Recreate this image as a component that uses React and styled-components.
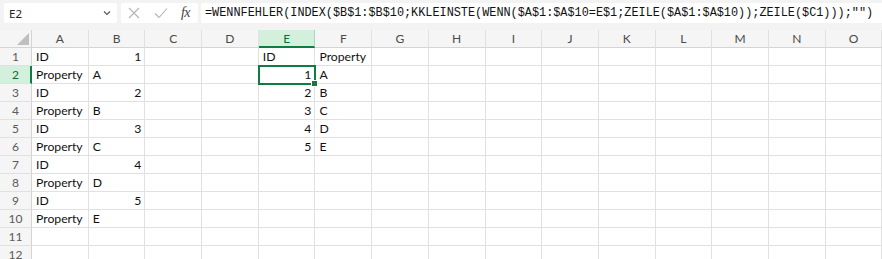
import React from "react";
import styled, { createGlobalStyle } from "styled-components";

const GlobalStyle = createGlobalStyle`
  html, body {
    margin: 0;
    padding: 0;
    background: #ffffff;
  }
  body {
    font-family: Lato, "Noto Sans", sans-serif;
    overflow: hidden;
  }
`;

const COLS = ["A", "B", "C", "D", "E", "F", "G", "H", "I", "J", "K", "L", "M", "N", "O"];
const ROWS = 12;
const FORMULA =
  '=WENNFEHLER(INDEX($B$1:$B$10;KKLEINSTE(WENN($A$1:$A$10=E$1;ZEILE($A$1:$A$10));ZEILE($C1)));"")';

// cell values keyed by "col+row"
const data = {};
for (let i = 0; i < 5; i++) {
  data["A" + (i * 2 + 1)] = { v: "ID" };
  data["B" + (i * 2 + 1)] = { v: String(i + 1), num: true };
  data["A" + (i * 2 + 2)] = { v: "Property" };
  data["B" + (i * 2 + 2)] = { v: "ABCDE"[i] };
  data["E" + (i + 2)] = { v: String(i + 1), num: true };
  data["F" + (i + 2)] = { v: "ABCDE"[i] };
}
data["E1"] = { v: "ID" };
data["F1"] = { v: "Property" };

const SEL_COL = "E";
const SEL_ROW = 2;

const App = () => {
  return (
    <Page>
      <GlobalStyle />
      <TopBar>
        <NameBox>
          <span>E2</span>
          <svg width="8" height="6" viewBox="0 0 8 6">
            <path d="M1 1.5 L4 4.5 L7 1.5" fill="none" stroke="#555" strokeWidth="1.1" />
          </svg>
        </NameBox>
        <FxBox>
          <svg width="14" height="14" viewBox="0 0 14 14">
            <path d="M2 2 L12 12 M12 2 L2 12" stroke="#b4b4b4" strokeWidth="1.1" fill="none" />
          </svg>
          <svg width="16" height="14" viewBox="0 0 16 14">
            <path d="M2 7.5 L6 11.5 L14 2.5" stroke="#b4b4b4" strokeWidth="1.1" fill="none" />
          </svg>
          <FxLabel>fx</FxLabel>
        </FxBox>
        <FormulaBox>{FORMULA}</FormulaBox>
      </TopBar>
      <Sheet>
        <Corner>
          <svg width="12" height="12" viewBox="0 0 12 12">
            <path d="M12 0 L12 12 L0 12 Z" fill="#bfbfbf" />
          </svg>
        </Corner>
        {COLS.map((c) => (
          <ColHead key={c} $selected={c === SEL_COL}>
            {c}
          </ColHead>
        ))}
        {Array.from({ length: ROWS }, (_, r) => {
          const row = r + 1;
          return (
            <React.Fragment key={row}>
              <RowHead $selected={row === SEL_ROW}>{row}</RowHead>
              {COLS.map((c) => {
                const cell = data[c + row];
                const active = c === SEL_COL && row === SEL_ROW;
                return (
                  <Cell key={c} $num={cell && cell.num} $active={active}>
                    {cell ? cell.v : ""}
                    {active && <FillHandle />}
                  </Cell>
                );
              })}
            </React.Fragment>
          );
        })}
      </Sheet>
    </Page>
  );
};

export default App;

const Page = styled.div`
  width: 882px;
  height: 259px;
  overflow: hidden;
  background: #ffffff;
`;

const TopBar = styled.div`
  height: 30px;
  box-sizing: border-box;
  display: flex;
  align-items: flex-start;
  padding: 3px 0 0 4px;
  gap: 3px;
  background: #f3f3f3;
`;

const BoxBase = styled.div`
  height: 20px;
  box-sizing: border-box;
  background: #ffffff;
  border-radius: 2px;
  display: flex;
  align-items: center;
`;

const NameBox = styled(BoxBase)`
  width: 113px;
  padding: 0 6px 0 5px;
  justify-content: space-between;
  font-family: "Noto Sans", sans-serif;
  font-size: 11.5px;
  color: #222;
  margin-right: 1px;
`;

const FxBox = styled(BoxBase)`
  width: 77px;
  padding: 0 8px 0 6px;
  justify-content: space-between;
`;

const FxLabel = styled.span`
  font-family: "Liberation Serif", serif;
  font-style: italic;
  font-size: 14px;
  color: #444;
  letter-spacing: -0.5px;
`;

const FormulaBox = styled(BoxBase)`
  flex: 1;
  padding-left: 4px;
  font-family: "Liberation Mono", monospace;
  font-size: 11.85px;
  color: #111;
  white-space: nowrap;
  overflow: hidden;
  border-radius: 2px 0 0 2px;
`;

const Sheet = styled.div`
  display: grid;
  grid-template-columns: 32px repeat(15, 56.7px);
  grid-auto-rows: 18px;
`;

const Corner = styled.div`
  background: #f5f5f5;
  border-right: 1px solid #d4d4d4;
  border-bottom: 1px solid #d4d4d4;
  box-sizing: border-box;
  display: flex;
  align-items: flex-end;
  justify-content: flex-end;
  padding: 0 2px 2px 0;
`;

const ColHead = styled.div`
  box-sizing: border-box;
  background: ${(p) => (p.$selected ? "#d3f0dd" : "#f5f5f5")};
  color: ${(p) => (p.$selected ? "#0e6b38" : "#4a4a4a")};
  border-right: 1px solid ${(p) => (p.$selected ? "#a8d8b9" : "#e1e1e1")};
  border-bottom: ${(p) => (p.$selected ? "2px solid #107c41" : "1px solid #d4d4d4")};
  font-size: 12px;
  display: flex;
  align-items: center;
  justify-content: center;
  padding-top: ${(p) => (p.$selected ? "1px" : "0")};
`;

const RowHead = styled.div`
  box-sizing: border-box;
  background: ${(p) => (p.$selected ? "#d3f0dd" : "#f5f5f5")};
  color: ${(p) => (p.$selected ? "#0e6b38" : "#5a5a5a")};
  border-right: ${(p) => (p.$selected ? "2px solid #107c41" : "1px solid #d4d4d4")};
  border-bottom: 1px solid #e1e1e1;
  font-size: 12px;
  display: flex;
  align-items: center;
  justify-content: center;
  padding-left: ${(p) => (p.$selected ? "1px" : "0")};
`;

const Cell = styled.div`
  position: relative;
  box-sizing: border-box;
  border-right: 1px solid #e1e1e1;
  border-bottom: 1px solid #e1e1e1;
  font-size: 12.2px;
  color: #111;
  line-height: 17px;
  padding: 0 3px 0 4px;
  text-align: ${(p) => (p.$num ? "right" : "left")};
  white-space: nowrap;
  overflow: visible;
  ${(p) =>
    p.$active &&
    `
    outline: 2px solid #107c41;
    outline-offset: -1px;
    z-index: 1;
  `}
`;

const FillHandle = styled.span`
  position: absolute;
  right: -4px;
  bottom: -4px;
  width: 5px;
  height: 5px;
  background: #107c41;
  border: 1px solid #ffffff;
`;
